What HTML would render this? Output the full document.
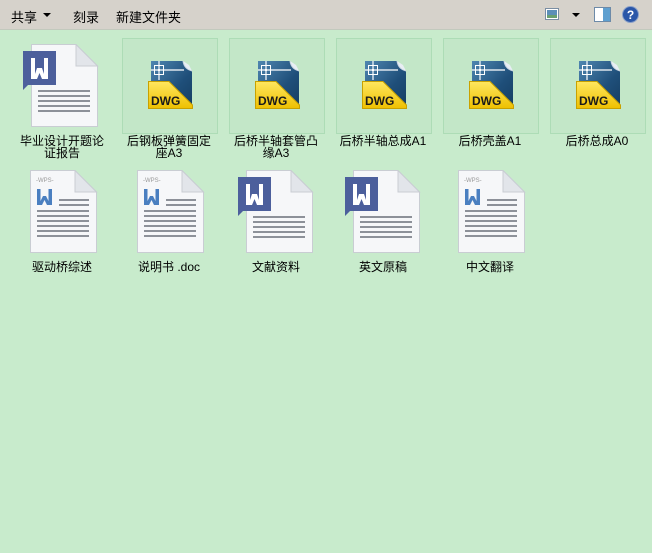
<!DOCTYPE html>
<html><head><meta charset="utf-8"><style>
body{margin:0;width:652px;height:553px;background:#c8ebcc;font-family:"Liberation Sans","Noto Sans CJK SC",sans-serif;position:relative;overflow:hidden}
.tb{position:absolute;left:0;top:0;width:652px;height:29px;background:#d6d2cb;border-bottom:1px solid #c2c9bd}
.tb span{position:absolute;top:7px;font-size:13px;color:#000}
.box{position:absolute;top:38px;width:94px;height:94px;border:1px solid #addcb6;background:#c3e7c8}
.lbl{position:absolute;width:104px;text-align:center;font-size:12px;line-height:12px;color:#000;font-family:"Liberation Sans","SimSun","Noto Sans CJK SC",sans-serif}
svg.ic{position:absolute}
</style></head><body>
<div class="tb">
<span style="left:11px">共享</span>
<svg style="position:absolute;left:43px;top:13px" width="8" height="5"><path d="M0 0H8L4 4Z" fill="#000"/></svg>
<span style="left:73px">刻录</span>
<span style="left:116px">新建文件夹</span>
<svg style="position:absolute;left:545px;top:8px" width="14" height="12"><rect x="0.5" y="0.5" width="13" height="11" fill="#fff" stroke="#7a8ea3"/><rect x="2" y="2" width="10" height="5" fill="#5c8fb8"/><rect x="2" y="7" width="10" height="3" fill="#6aa070"/></svg>
<svg style="position:absolute;left:572px;top:13px" width="8" height="5"><path d="M0 0H8L4 4Z" fill="#000"/></svg>
<svg style="position:absolute;left:594px;top:7px" width="17" height="15"><rect x="0.5" y="0.5" width="16" height="14" fill="#fff" stroke="#6d8aa8"/><rect x="9" y="1" width="7" height="13" fill="#5fa0d0"/></svg>
<svg style="position:absolute;left:622px;top:6px" width="17" height="17"><circle cx="8.5" cy="8.5" r="8" fill="#2a56a8" stroke="#8aa0c8"/><text x="8.5" y="13" font-size="12" font-weight="bold" fill="#fff" text-anchor="middle" font-family="Liberation Sans">?</text></svg>
</div>

<svg width="0" height="0" style="position:absolute">
<defs>
<linearGradient id="bl" x1="0" y1="0" x2="1" y2="1"><stop offset="0" stop-color="#4f86b0"/><stop offset="0.6" stop-color="#1f4f7a"/><stop offset="1" stop-color="#163e62"/></linearGradient>
<linearGradient id="yl" x1="0" y1="0" x2="0" y2="1"><stop offset="0" stop-color="#ffe760"/><stop offset="1" stop-color="#eec000"/></linearGradient>
<g id="page"><path d="M0.5 0.5H45L66.5 22V82.5H0.5Z" fill="#f6f7f9" stroke="#c9cdd3"/><path d="M45 0.5V22H66.5Z" fill="#e2e5ea" stroke="#c9cdd3"/></g>
<g id="lines5" fill="#8d9199"><rect x="0" y="0" width="52" height="2"/><rect x="0" y="5" width="52" height="2"/><rect x="0" y="10" width="52" height="2"/><rect x="0" y="15" width="52" height="2"/><rect x="0" y="20" width="52" height="2"/></g>
<g id="word"><use href="#page" x="8" y="0"/><use href="#lines5" x="15" y="46"/><path d="M0 7H33V41H5L0 46Z" fill="#4c5f9c"/><path d="M8 14H12V30L14 24H19L21 30V14H25V35H19L16.5 29L14 35H8Z" fill="#fff"/></g>
<g id="wps"><use href="#page" x="0" y="0"/><text x="6" y="12" font-size="6" fill="#999" font-family="Liberation Sans">-WPS-</text><path d="M7 19H10.5V31L13 26H16L18.5 31V19H22V35H17L14.5 30L12 35H7Z" fill="#4a7fc0"/><rect x="29" y="29" width="30" height="2" fill="#8d9199"/><rect x="29" y="34" width="30" height="2" fill="#8d9199"/><use href="#lines5" x="7" y="40"/><rect x="7" y="65" width="52" height="2" fill="#8d9199"/></g>
<g id="dwg">
<path d="M3 0H35L44 10V46H3Z" fill="url(#bl)"/>
<path d="M35 0Q36 8 44 10L41 4Z" fill="#e8eef4"/>
<path d="M35 0Q36 8 44 10" fill="none" stroke="#c9d6e2"/>
<path d="M3 9H36M11 0V19" stroke="#fff" stroke-width="1.2"/>
<rect x="6.5" y="4.5" width="9" height="9" fill="none" stroke="#fff"/><rect x="10" y="8" width="2" height="2" fill="#fff"/>
<path d="M0.5 20.5H21L44.5 44V47.5H0.5Z" fill="url(#yl)" stroke="#c9a100"/>
<text x="3" y="44" font-size="12" font-weight="bold" fill="#1a1a1a" font-family="Liberation Sans">DWG</text></g>
</defs></svg>

<div class="box" style="left:122px"></div>
<div class="box" style="left:229px"></div>
<div class="box" style="left:336px"></div>
<div class="box" style="left:443px"></div>
<div class="box" style="left:550px"></div>

<svg class="ic" style="left:23px;top:44px" width="80" height="86"><use href="#word"/></svg>
<svg class="ic" style="left:148px;top:61px" width="46" height="49"><use href="#dwg"/></svg>
<svg class="ic" style="left:255px;top:61px" width="46" height="49"><use href="#dwg"/></svg>
<svg class="ic" style="left:362px;top:61px" width="46" height="49"><use href="#dwg"/></svg>
<svg class="ic" style="left:469px;top:61px" width="46" height="49"><use href="#dwg"/></svg>
<svg class="ic" style="left:576px;top:61px" width="46" height="49"><use href="#dwg"/></svg>

<div class="lbl" style="left:10px;top:135px">毕业设计开题论<br>证报告</div>
<div class="lbl" style="left:117px;top:135px">后钢板弹簧固定<br>座A3</div>
<div class="lbl" style="left:224px;top:135px">后桥半轴套管凸<br>缘A3</div>
<div class="lbl" style="left:331px;top:135px">后桥半轴总成A1</div>
<div class="lbl" style="left:438px;top:135px">后桥壳盖A1</div>
<div class="lbl" style="left:545px;top:135px">后桥总成A0</div>

<svg class="ic" style="left:30px;top:170px" width="70" height="86"><use href="#wps"/></svg>
<svg class="ic" style="left:137px;top:170px" width="70" height="86"><use href="#wps"/></svg>
<svg class="ic" style="left:238px;top:170px" width="80" height="86"><use href="#word"/></svg>
<svg class="ic" style="left:345px;top:170px" width="80" height="86"><use href="#word"/></svg>
<svg class="ic" style="left:458px;top:170px" width="70" height="86"><use href="#wps"/></svg>

<div class="lbl" style="left:10px;top:261px">驱动桥综述</div>
<div class="lbl" style="left:117px;top:261px">说明书 .doc</div>
<div class="lbl" style="left:224px;top:261px">文献资料</div>
<div class="lbl" style="left:331px;top:261px">英文原稿</div>
<div class="lbl" style="left:438px;top:261px">中文翻译</div>
</body></html>
